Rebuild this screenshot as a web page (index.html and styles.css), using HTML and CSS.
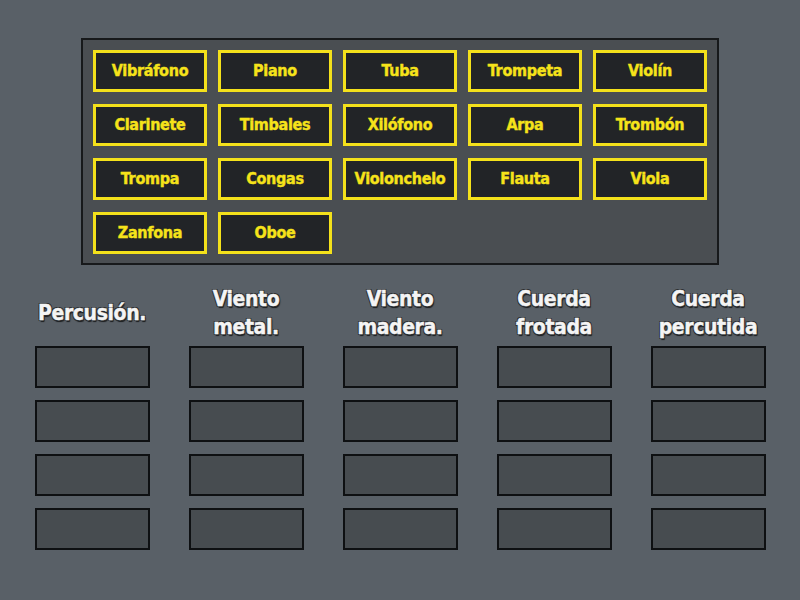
FILE: index.html
```html
<!DOCTYPE html>
<html lang="es">
<head>
<meta charset="utf-8">
<title>Clasificación de instrumentos</title>
<link rel="stylesheet" href="styles.css">
</head>
<body>
<div class="page">
  <div class="bank">
    <div class="tile">Vibráfono</div>
    <div class="tile">Piano</div>
    <div class="tile">Tuba</div>
    <div class="tile">Trompeta</div>
    <div class="tile">Violín</div>
    <div class="tile">Clarinete</div>
    <div class="tile">Timbales</div>
    <div class="tile">Xilófono</div>
    <div class="tile">Arpa</div>
    <div class="tile">Trombón</div>
    <div class="tile">Trompa</div>
    <div class="tile">Congas</div>
    <div class="tile">Violonchelo</div>
    <div class="tile">Flauta</div>
    <div class="tile">Viola</div>
    <div class="tile">Zanfona</div>
    <div class="tile">Oboe</div>
  </div>
  <div class="groups">
    <div class="group">
      <div class="head">Percusión.</div>
      <div class="slot"></div><div class="slot"></div><div class="slot"></div><div class="slot"></div>
    </div>
    <div class="group">
      <div class="head">Viento<br>metal.</div>
      <div class="slot"></div><div class="slot"></div><div class="slot"></div><div class="slot"></div>
    </div>
    <div class="group">
      <div class="head">Viento<br>madera.</div>
      <div class="slot"></div><div class="slot"></div><div class="slot"></div><div class="slot"></div>
    </div>
    <div class="group">
      <div class="head">Cuerda<br>frotada</div>
      <div class="slot"></div><div class="slot"></div><div class="slot"></div><div class="slot"></div>
    </div>
    <div class="group">
      <div class="head">Cuerda<br>percutida</div>
      <div class="slot"></div><div class="slot"></div><div class="slot"></div><div class="slot"></div>
    </div>
  </div>
</div>
</body>
</html>
```
FILE: styles.css
```css
html, body {
  margin: 0;
  padding: 0;
  background: #596067;
}
body {
  width: 800px;
  height: 600px;
  overflow: hidden;
  font-family: "DejaVu Sans Condensed", "DejaVu Sans", sans-serif;
  font-stretch: condensed;
}
.page {
  display: flex;
  flex-direction: column;
  align-items: center;
  padding-top: 38px;
}
.bank {
  box-sizing: border-box;
  width: 638px;
  height: 227px;
  background: #4a4e52;
  border: 2px solid #17191b;
  padding: 10px;
  display: grid;
  grid-template-columns: repeat(5, 114px);
  grid-auto-rows: 42px;
  column-gap: 11px;
  row-gap: 12px;
  align-content: start;
}
.tile {
  box-sizing: border-box;
  background: #222427;
  border: 3px solid #f4e11b;
  color: #f6e31a;
  font-weight: bold;
  font-size: 16px;
  letter-spacing: -0.3px;
  -webkit-text-stroke: 0.4px #f6e31a;
  display: flex;
  align-items: center;
  justify-content: center;
  padding-bottom: 2px;
}
.groups {
  display: flex;
  gap: 39px;
  margin-top: 20px;
}
.group {
  width: 115px;
  display: flex;
  flex-direction: column;
  gap: 12px;
}
.head {
  height: 56px;
  display: flex;
  align-items: center;
  justify-content: center;
  text-align: center;
  color: #f4f4f4;
  font-weight: bold;
  font-size: 21px;
  line-height: 28px;
  letter-spacing: -0.4px;
  -webkit-text-stroke: 0.4px #f4f4f4;
  text-shadow: 1px 1px 0 #2a2d30, -1px -1px 0 #2a2d30, 1px -1px 0 #2a2d30, -1px 1px 0 #2a2d30, 1px 2px 1px #1a1c1e;
  margin-bottom: -7px;
}
.slot {
  box-sizing: border-box;
  height: 42px;
  background: #474c50;
  border: 2px solid #0e1012;
}
```
